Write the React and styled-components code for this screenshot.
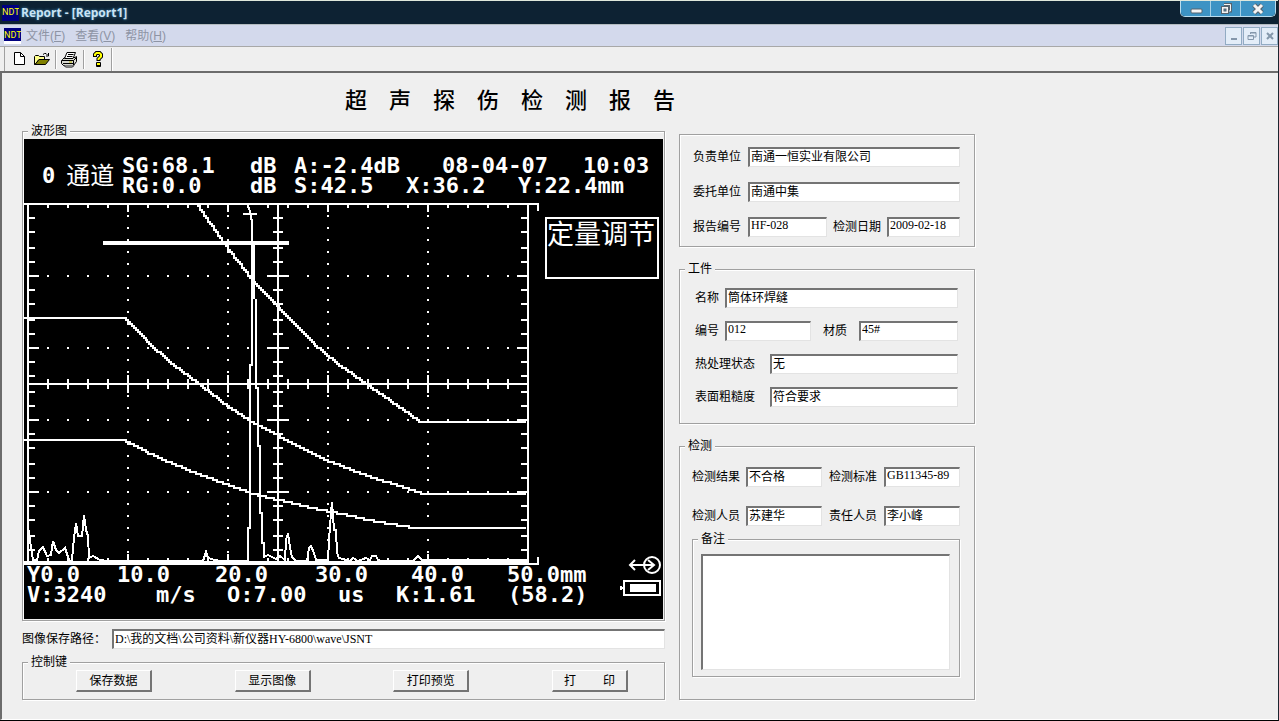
import styled, { createGlobalStyle } from 'styled-components'

// dB curves on the screen, [x, y]
const CURVES = [
	[
		[196, 204],
		[224, 244],
		[253, 282],
		[278, 308],
		[313, 344],
		[340, 366],
		[363, 382],
		[420, 422],
		[526, 422],
	],
	[
		[24, 318],
		[124, 318],
		[145, 340],
		[170, 363],
		[197, 383],
		[228, 407],
		[250, 421],
		[278, 436],
		[328, 461],
		[367, 476],
		[424, 494],
		[526, 494],
	],
	[
		[24, 440],
		[124, 440],
		[148, 453],
		[168, 462],
		[197, 474],
		[228, 485],
		[250, 493],
		[278, 500],
		[307, 507],
		[350, 516],
		[377, 522],
		[414, 528],
		[526, 528],
	],
]

const ECHO =
	'M29 530L31 548L33 560H37L39 551L43 547L47 556L51 555L53 541L56 550L59 553L65 548L68 557L70 561L72 560L74 538L76 523L78 536H82L84 515L86 530L88 536L89 558L93 556L100 560L107 561H203L206 552L208 558L215 560L220 561H248V528H250V365H252V220M254 242V299M256 299V388H258V446H260V513H262V543H264V557L268 555L276 559L280 556L285 560L286 540L288 533L290 548L292 557L296 561H307L309 548L311 546L314 553L316 560H328L329 540L331 513L332 502L334 530H336L337 553L339 558L350 561L353 558L358 561L366 558L370 560L372 556H376L378 560L382 561H413L418 556L422 560H528'

const range = (from, to, step) => {
	const list = []
	for (let v = from; v <= to; v += step) list.push(v)
	return list
}

// the instrument has a 2px dot, so a curve is a row of steps
const toSteps = points => {
	let path = ''
	for (let i = 0; i < points.length - 1; i++) {
		const [x1, y1] = points[i]
		const [x2, y2] = points[i + 1]
		for (let x = x1; x < x2; x += 2) {
			const y = Math.round((y1 + ((y2 - y1) * (x - x1)) / (x2 - x1)) / 2) * 2
			path += path ? `V${y}H${x + 2}` : `M${x} ${y}H${x + 2}`
		}
	}
	return path
}

function Plot() {
	const columns = range(48, 508, 20)
	const isMajorX = x => (x - 28) % 100 === 0
	const rows = [204, 276, 348, 420, 492].flatMap(top =>
		[0, 14, 28, 44, 58].map(d => ({ y: top + d, major: d === 0 })),
	)

	let ticks = ''
	columns.forEach(x => {
		const m = isMajorX(x)
		ticks += `M${x} 204V${m ? 212 : 208}M${x} ${m ? 375 : 379}V${m ? 393 : 389}M${x} ${m ? 554 : 558}V562`
	})
	rows.slice(1).forEach(({ y, major }) => {
		ticks += `M28 ${y}H${major ? 39 : 35}M${major ? 267 : 273} ${y}H${major ? 289 : 283}M${major ? 517 : 521} ${y}H528`
	})

	let dots = ''
	;[276, 348, 420, 492].forEach(y =>
		columns.forEach(x => (dots += `M${x - 1} ${y}h2`)),
	)
	;[128, 228, 328, 428].forEach(x =>
		range(216, 552, 12).forEach(y => (dots += `M${x - 1} ${y}h2`)),
	)

	return (
		<PlotSvg viewBox="24 203 521 362" shapeRendering="crispEdges">
			<path d="M24 204H538V211M28 204V564M528 204V564M278 204V564M28 384H528" />
			<path d="M24 564H538V557M24 562H528" />
			<path d={ticks} />
			<path d={dots} />
			<path d="M103 243H289" strokeWidth="4" />
			<path d="M248 205L250 212L252 222M243 214H257" />
			{CURVES.map(points => (
				<path key={points[0].join()} d={toSteps(points)} />
			))}
			<path d={ECHO} />
		</PlotSvg>
	)
}

function Screen() {
	return (
		<ScreenBox>
			<ScreenHeader>
				<Channel>
					<span>0</span>
					<b>通道</b>
				</Channel>
				<div>
					<Readout $cols="128px 44px 148px 141px auto">
						<span>SG:68.1</span>
						<span>dB</span>
						<span>A:-2.4dB</span>
						<span>08-04-07</span>
						<span>10:03</span>
					</Readout>
					<Readout $cols="128px 44px 112px 112px auto">
						<span>RG:0.0</span>
						<span>dB</span>
						<span>S:42.5</span>
						<span>X:36.2</span>
						<span>Y:22.4mm</span>
					</Readout>
				</div>
			</ScreenHeader>
			<ScreenBody>
				<PlotArea>
					<Plot />
					<Scale>
						<Readout $cols="90px 98px 100px 96px 96px auto">
							<span>Y0.0</span>
							<span>10.0</span>
							<span>20.0</span>
							<span>30.0</span>
							<span>40.0</span>
							<span>50.0mm</span>
						</Readout>
						<Readout $cols="129px 71px 111px 58px 112px auto">
							<span>V:3240</span>
							<span>m/s</span>
							<span>O:7.00</span>
							<span>us</span>
							<span>K:1.61</span>
							<span>(58.2)</span>
						</Readout>
					</Scale>
				</PlotArea>
				<ScreenSide>
					<ScreenMenu>定量调节</ScreenMenu>
					<Status width="44" height="42" viewBox="0 0 44 42">
						<path d="M12 10H36M17 5L12 10L17 15M30 5L36 10L30 15" />
						<circle cx="34" cy="10" r="8" />
						<path d="M6 26H42V40H6ZM2 33H6M3 31V35" shapeRendering="crispEdges" />
						<rect x="12" y="29" width="26" height="8" fill="#fff" stroke="none" />
					</Status>
				</ScreenSide>
			</ScreenBody>
		</ScreenBox>
	)
}

function Field({ id, label, value, center }) {
	return (
		<>
			<Caption htmlFor={id} $center={center}>
				{label}
			</Caption>
			<Input id={id} defaultValue={value} />
		</>
	)
}

function Group({ title, pad, children }) {
	return (
		<GroupBox>
			{title && <Legend>{title}</Legend>}
			<GroupBody $pad={pad}>{children}</GroupBody>
		</GroupBox>
	)
}

function TitleBar() {
	return (
		<Header>
			<Logo>NDT</Logo>
			<WindowTitle>Report - [Report1]</WindowTitle>
			<WindowButtons>
				<WindowButton $width={29} aria-label="最小化">
					<svg width="14" height="12" viewBox="0 0 14 12">
						<rect x="2" y="6" width="11" height="4" rx="1" fill="#f4f4f4" stroke="#55636e" />
					</svg>
				</WindowButton>
				<WindowButton $width={30} aria-label="还原">
					<svg width="14" height="12" viewBox="0 0 14 12" fill="none">
						<path d="M5 1.5H11.5V8H9" stroke="#55636e" strokeWidth="3" />
						<path d="M5 1.5H11.5V8H9" stroke="#f4f4f4" />
						<rect x="2.5" y="3.5" width="7" height="7" fill="#f4f4f4" stroke="#55636e" />
						<rect x="5" y="6" width="2" height="2" fill="#3d8fbd" stroke="#55636e" />
					</svg>
				</WindowButton>
				<WindowButton $width={35} aria-label="关闭">
					<svg width="14" height="12" viewBox="0 0 14 12" fill="none">
						<path d="M3 2L11 10M11 2L3 10" stroke="#55636e" strokeWidth="5" />
						<path d="M3 2L11 10M11 2L3 10" stroke="#f4f4f4" strokeWidth="3" />
					</svg>
				</WindowButton>
			</WindowButtons>
		</Header>
	)
}

function MenuBar() {
	return (
		<Menu>
			<Logo $framed>NDT</Logo>
			<MenuButton>
				文件(<u>F</u>)
			</MenuButton>
			<MenuButton>
				查看(<u>V</u>)
			</MenuButton>
			<MenuButton>
				帮助(<u>H</u>)
			</MenuButton>
			<ChildButtons>
				<ChildButton aria-label="最小化">
					<svg width="10" height="10" viewBox="0 0 10 10">
						<path d="M2 8H8" strokeWidth="2" />
					</svg>
				</ChildButton>
				<ChildButton aria-label="还原">
					<svg width="10" height="10" viewBox="0 0 10 10">
						<path d="M3.5 3V1.5H9V6H7M1 4.5H6.5V8.5H1ZM3 2H9M1 5H6" />
					</svg>
				</ChildButton>
				<ChildButton aria-label="关闭">
					<svg width="10" height="10" viewBox="0 0 10 10">
						<path d="M2 2L8 8M8 2L2 8" strokeWidth="2" />
					</svg>
				</ChildButton>
			</ChildButtons>
		</Menu>
	)
}

function ToolBar() {
	return (
		<Tools>
			<ToolGroup>
				<ToolButton aria-label="新建">
					<svg width="16" height="16" viewBox="0 0 16 16">
						<path d="M3.5 1.5H9.5L13.5 5.5V13.5H3.5Z" fill="#fff" stroke="#000" />
						<path d="M9.5 1.5V5.5H13.5" fill="none" stroke="#000" />
					</svg>
				</ToolButton>
				<ToolButton aria-label="打开">
					<svg width="16" height="16" viewBox="0 0 16 16">
						<path d="M.5 13.5V5.5L1.5 4.5H4.5L5.5 5.5H10.5V8.5H5L1 13.5Z" fill="#ffff8c" stroke="#000" />
						<path d="M1 13.5L5 8.5H15.5L11.5 13.5Z" fill="#808000" stroke="#000" />
						<path d="M9 3.5L10.5 2.5H12L13.5 4M14.5 2V5H12" fill="none" stroke="#000" />
					</svg>
				</ToolButton>
			</ToolGroup>
			<ToolGroup>
				<ToolButton aria-label="打印">
					<svg width="17" height="17" viewBox="0 0 17 17">
						<path d="M1.5 8.5L3.5 6.5H14L15.5 5.5V10.5L12.5 14.5H2.5L.5 12.5V9.5Z" fill="#d8d8d0" stroke="#000" />
						<path d="M3.5 7.5L6 1.5H14.5L12 7.5Z" fill="#fff" stroke="#000" />
						<path d="M7 3.5H12.5M6 5.5H11.5M1 9.5H12.5L15 7M12.5 9.5V14" fill="none" stroke="#000" />
						<path d="M2 12.5H12" stroke="#000" />
						<path d="M8 11H11" stroke="#b8b800" />
						<path d="M3 14.5L4.5 16H11.5L13 14.5" fill="#fff" stroke="#000" />
					</svg>
				</ToolButton>
			</ToolGroup>
			<ToolGroup>
				<ToolButton aria-label="帮助">
					<svg width="16" height="16" viewBox="0 0 16 16" fill="none">
						<path d="M5 6V3.5L6.5 2H9.5L11 3.5V5.5L8.5 8V10" stroke="#000" strokeWidth="4" />
						<rect x="6" y="11" width="5" height="5" rx="1" fill="#000" />
						<path d="M5 5V3.5L6.5 2H9.5L11 3.5V5.5L8.5 8V9" stroke="#ff0" strokeWidth="2" />
						<rect x="7" y="12" width="3" height="2" fill="#ff0" />
					</svg>
				</ToolButton>
			</ToolGroup>
		</Tools>
	)
}

function App() {
	return (
		<Window>
			<GlobalStyle />
			<TitleBar />
			<MenuBar />
			<ToolBar />
			<Report>
				<Title>超　声　探　伤　检　测　报　告</Title>
				<Columns>
					<Left>
						<Group title="波形图" pad="2px 1px 1px">
							<Screen />
						</Group>
						<PathRow $cols="84px 1fr">
							<Field
								id="path"
								label="图像保存路径："
								value="D:\我的文档\公司资料\新仪器HY-6800\wave\JSNT"
							/>
						</PathRow>
						<Group title="控制键" pad="2px 36px 7px 53px">
							<Buttons>
								<Button>保存数据</Button>
								<Button>显示图像</Button>
								<Button>打印预览</Button>
								<Button>打　　 印</Button>
							</Buttons>
						</Group>
					</Left>
					<Right>
						<Group pad="12px 14px 9px 12px">
							<Rows $gap={15}>
								<Row $cols="50px 1fr">
									<Field id="owner" label="负责单位" value="南通一恒实业有限公司" center />
								</Row>
								<Row $cols="50px 1fr">
									<Field id="client" label="委托单位" value="南通中集" center />
								</Row>
								<Row $cols="50px 79px 48px 1fr">
									<Field id="number" label="报告编号" value="HF-028" center />
									<Field id="date" label="检测日期" value="2009-02-18" />
								</Row>
							</Rows>
						</Group>
						<Group title="工件" pad="13px 16px 16px 15px">
							<Rows $gap={13}>
								<Row $cols="24px 1fr">
									<Field id="name" label="名称" value="筒体环焊缝" />
								</Row>
								<Row $cols="24px 86px 36px 1fr">
									<Field id="code" label="编号" value="012" />
									<Field id="material" label="材质" value="45#" center />
								</Row>
								<Row $cols="69px 1fr">
									<Field id="heat" label="热处理状态" value="无" />
								</Row>
								<Row $cols="69px 1fr">
									<Field id="surface" label="表面粗糙度" value="符合要求" />
								</Row>
							</Rows>
						</Group>
						<Group title="检测" pad="15px 14px 22px 12px">
							<Rows $gap={19}>
								<Row $cols="48px 76px 50px 1fr">
									<Field id="result" label="检测结果" value="不合格" />
									<Field id="standard" label="检测标准" value="GB11345-89" center />
								</Row>
								<Row $cols="48px 76px 50px 1fr">
									<Field id="inspector" label="检测人员" value="苏建华" />
									<Field id="manager" label="责任人员" value="李小峰" center />
								</Row>
							</Rows>
							<Remark>
								<Group title="备注" pad="9px 9px 6px 8px">
									<TextArea aria-label="备注" />
								</Group>
							</Remark>
						</Group>
					</Right>
				</Columns>
			</Report>
		</Window>
	)
}
export default App

const GlobalStyle = createGlobalStyle`
	* {
		box-sizing: border-box;
	}

	body {
		margin: 0;
		background-color: #efefef;
		color: #000;
		font-family: 'Liberation Serif', 'Noto Sans CJK SC', serif;
		font-size: 12px;
		line-height: 14px;
	}

	button, input, textarea {
		font: inherit;
		color: inherit;
	}
`

const Window = styled.div`
	min-height: 100vh;
	display: flex;
	flex-direction: column;
	border-bottom: 1px solid #000;
	border-right: 1px solid #1b2630;
`

const Header = styled.header`
	height: 25px;
	display: flex;
	align-items: center;
	padding-left: 2px;
	background-color: #0d2233;
	border-top: 1px solid #dfe8dc;
	border-bottom: 1px solid #b4bcc0;
`

const Logo = styled.span`
	width: 17px;
	height: 16px;
	overflow: hidden;
	background-color: #000080;
	border-bottom: ${({ $framed }) => ($framed ? '3px solid #fff' : 'none')};
	color: #ff0;
	font-family: Roboto, sans-serif;
	font-size: 9px;
	line-height: 14px;
	text-align: center;
`

const WindowTitle = styled.span`
	padding-left: 2px;
	color: #c9e4f5;
	font-family: 'Open Sans', sans-serif;
	font-size: 12px;
	font-weight: 700;
	text-shadow: 0 0 3px #3f86b4;
`

const WindowButtons = styled.div`
	align-self: flex-start;
	display: flex;
	margin-left: auto;
	margin-right: 2px;
	overflow: hidden;
	border: 1px solid #b9dcee;
	border-top: none;
	border-radius: 0 0 5px 5px;
`

const WindowButton = styled.button`
	width: ${({ $width }) => $width}px;
	height: 15px;
	display: flex;
	align-items: center;
	justify-content: center;
	padding: 0;
	border: none;
	background-color: #3d93c4;

	& + & {
		border-left: 1px solid #a5d0e6;
	}
`

const Menu = styled.nav`
	height: 22px;
	display: flex;
	align-items: center;
	padding-left: 4px;
	background-color: #d3d9ec;
	border-bottom: 1px solid #a8a8a8;
`

const MenuButton = styled.button`
	padding: 0 5px;
	border: none;
	background: none;
	color: #8e94a4;
	font-family: 'Liberation Sans', 'Noto Sans CJK SC', sans-serif;
`

const ChildButtons = styled.div`
	display: flex;
	gap: 1px;
	margin-left: auto;
`

const ChildButton = styled.button`
	width: 17px;
	height: 18px;
	display: flex;
	align-items: center;
	justify-content: center;
	padding: 0;
	border: 1px solid #91abc3;
	background-color: #e3edf8;

	svg {
		fill: none;
		stroke: #8497ab;
	}
`

const Tools = styled.div`
	height: 24px;
	display: flex;
	align-items: center;
	margin-left: 4px;
	border-left: 1px solid #a0a0a0;
`

const ToolGroup = styled.div`
	height: 19px;
	display: flex;
	gap: 2px;
	padding: 0 3px;
	border-right: 1px solid #a0a0a0;
	box-shadow: 1px 0 #fff;

	&:last-child {
		height: 23px;
		align-items: center;
	}
`

const ToolButton = styled.button`
	width: 21px;
	height: 19px;
	display: flex;
	align-items: center;
	justify-content: center;
	padding: 0;
	border: none;
	background: none;
`

const Report = styled.main`
	flex: 1;
	padding: 15px 20px 18px;
	border: 2px solid #6c6c6c;
	border-right: none;
	border-bottom: 1px solid #fff;
`

const Title = styled.h1`
	margin: 0;
	padding-left: 323px;
	font-family: 'Noto Sans CJK SC', sans-serif;
	font-size: 22px;
	font-weight: 500;
	line-height: 20px;
`

const Columns = styled.div`
	display: grid;
	grid-template-columns: minmax(0, 643px) minmax(0, 296px);
	gap: 14px;
	align-items: start;
	padding-top: 17px;
`

const Left = styled.div`
	display: flex;
	flex-direction: column;
`

const Right = styled.div`
	display: flex;
	flex-direction: column;
	gap: 16px;
	padding-top: 9px;
`

const GroupBox = styled.fieldset`
	min-width: 0;
	margin: 0;
	padding: 0;
	border: 1px solid #a0a0a0;
	box-shadow: 1px 1px #fff, inset 1px 1px #fff;
`

const Legend = styled.legend`
	margin-left: 5px;
	padding: 0 3px;
	background-color: #efefef;
	line-height: 12px;
`

const GroupBody = styled.div`
	padding: ${({ $pad }) => $pad};
`

const Remark = styled.div`
	padding-top: 7px;
`

const Rows = styled.div`
	display: grid;
	gap: ${({ $gap }) => $gap}px;
`

const Row = styled.div`
	display: grid;
	grid-template-columns: ${({ $cols }) => $cols};
	column-gap: 6px;
	align-items: center;
`

const PathRow = styled(Row)`
	padding: 8px 0 7px;
`

const Caption = styled.label`
	text-align: ${({ $center }) => ($center ? 'center' : 'left')};
	white-space: nowrap;
`

const Input = styled.input`
	width: 100%;
	min-width: 0;
	height: 20px;
	padding: 0 1px 4px;
	border: 2px solid #747474;
	border-right: 1px solid #e3e3e3;
	border-bottom: 1px solid #e3e3e3;
	border-radius: 0;
	outline: none;
	background-color: #fff;
`

const TextArea = styled.textarea`
	display: block;
	width: 100%;
	height: 116px;
	border: 2px solid #747474;
	border-right: 1px solid #e3e3e3;
	border-bottom: 1px solid #e3e3e3;
	border-radius: 0;
	outline: none;
	resize: none;
	background-color: #fff;
`

const Buttons = styled.div`
	display: flex;
	justify-content: space-between;
`

const Button = styled.button`
	width: 76px;
	height: 22px;
	padding: 0;
	border: 1px solid #fff;
	border-right: 2px solid #747474;
	border-bottom: 2px solid #747474;
	background-color: #efefef;
	white-space: nowrap;
`

const ScreenBox = styled.div`
	padding-bottom: 14px;
	overflow: hidden;
	background-color: #000;
	color: #fff;
	font-family: 'DejaVu Sans Mono', 'Noto Sans CJK SC', monospace;
	font-size: 22px;
	font-weight: 700;
`

const ScreenHeader = styled.div`
	height: 64px;
	display: flex;
	padding-top: 17px;
`

const Channel = styled.div`
	width: 98px;
	height: 40px;
	display: flex;
	align-items: center;
	gap: 11px;
	padding-left: 18px;

	b {
		font-size: 24px;
		font-weight: 400;
		white-space: nowrap;
	}
`

const Readout = styled.div`
	display: grid;
	grid-template-columns: ${({ $cols }) => $cols};
	line-height: 20px;
	white-space: nowrap;
`

const ScreenBody = styled.div`
	display: grid;
	grid-template-columns: minmax(0, 521px) 118px;
`

const PlotArea = styled.div`
	min-width: 0;
`

const PlotSvg = styled.svg`
	display: block;
	width: 100%;
	fill: none;
	stroke: #fff;
	stroke-width: 2;
`

const Scale = styled.div`
	padding-left: 3px;
`

const ScreenSide = styled.div`
	display: flex;
	flex-direction: column;
	justify-content: space-between;
	align-items: flex-end;
	padding: 14px 1px 8px 0;
`

const ScreenMenu = styled.div`
	align-self: flex-start;
	width: 114px;
	height: 62px;
	border: 2px solid #fff;
	font-size: 27px;
	font-weight: 400;
	line-height: 32px;
	white-space: nowrap;
`

const Status = styled.svg`
	fill: none;
	stroke: #fff;
	stroke-width: 2;
`
